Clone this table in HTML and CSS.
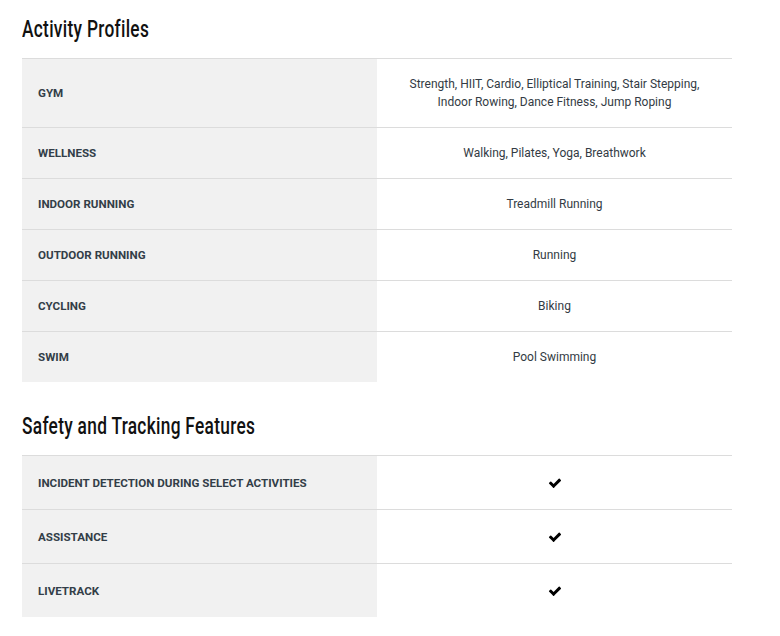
FILE: index.html
```html
<!DOCTYPE html>
<html>
<head>
<meta charset="utf-8">
<link rel="stylesheet" href="styles.css">
</head>
<body>
<div class="page">
  <h2 class="title"><span class="narrow">Activity Profiles</span></h2>
  <div class="spec">
    <div class="row"><div class="label">GYM</div><div class="value">Strength, HIIT, Cardio, Elliptical Training, Stair Stepping,<br>Indoor Rowing, Dance Fitness, Jump Roping</div></div>
    <div class="row"><div class="label">WELLNESS</div><div class="value">Walking, Pilates, Yoga, Breathwork</div></div>
    <div class="row"><div class="label">INDOOR RUNNING</div><div class="value">Treadmill Running</div></div>
    <div class="row"><div class="label">OUTDOOR RUNNING</div><div class="value">Running</div></div>
    <div class="row"><div class="label">CYCLING</div><div class="value">Biking</div></div>
    <div class="row"><div class="label">SWIM</div><div class="value">Pool Swimming</div></div>
  </div>
  <h2 class="title second"><span class="narrow">Safety and Tracking Features</span></h2>
  <div class="spec checks">
    <div class="row"><div class="label">INCIDENT DETECTION DURING SELECT ACTIVITIES</div><div class="value"><svg class="check" viewBox="0 0 1792 1792"><path d="M1671 566q0 40-28 68l-724 724-136 136q-28 28-68 28t-68-28l-136-136-362-362q-28-28-28-68t28-68l136-136q28-28 68-28t68 28l294 295 656-657q28-28 68-28t68 28l136 136q28 28 28 68z"/></svg></div></div>
    <div class="row"><div class="label">ASSISTANCE</div><div class="value"><svg class="check" viewBox="0 0 1792 1792"><path d="M1671 566q0 40-28 68l-724 724-136 136q-28 28-68 28t-68-28l-136-136-362-362q-28-28-28-68t28-68l136-136q28-28 68-28t68 28l294 295 656-657q28-28 68-28t68 28l136 136q28 28 28 68z"/></svg></div></div>
    <div class="row"><div class="label">LIVETRACK</div><div class="value"><svg class="check" viewBox="0 0 1792 1792"><path d="M1671 566q0 40-28 68l-724 724-136 136q-28 28-68 28t-68-28l-136-136-362-362q-28-28-28-68t28-68l136-136q28-28 68-28t68 28l294 295 656-657q28-28 68-28t68 28l136 136q28 28 28 68z"/></svg></div></div>
  </div>
</div>
</body>
</html>
```
FILE: styles.css
```css
html, body { margin: 0; padding: 0; background: #fff; }
.page { padding: 14px 48px 0 22px; font-family: Roboto, "Liberation Sans", sans-serif; }
.title {
  margin: 0 0 13px 0;
  font-family: Roboto, "Liberation Sans", sans-serif;
  font-weight: 500;
  font-size: 23px;
  line-height: 31px;
  color: #111;
}
.narrow {
  display: inline-block;
  transform: scaleX(0.752);
  transform-origin: left center;
  letter-spacing: 0.4px;
}
.title.second { margin-top: 29px; }
.spec { border-top: 1px solid #dcdcdc; }
.row { display: grid; grid-template-columns: 355px 1fr; border-bottom: 1px solid #dcdcdc; }
.row:last-child { border-bottom: none; }
.label {
  background: #f1f1f1;
  padding: 16px 16px;
  font-size: 11.6px;
  font-weight: 700;
  line-height: 18px;
  color: #333e48;
  display: flex; align-items: center;
}
.value {
  padding: 16px 16px;
  font-size: 12px;
  line-height: 18px;
  color: #333b44;
  text-align: center;
  display: flex; align-items: center; justify-content: center;
}
.checks .value { padding: 16px; min-height: 21px; }
.check { width: 14px; height: 14px; fill: #000; }
```
